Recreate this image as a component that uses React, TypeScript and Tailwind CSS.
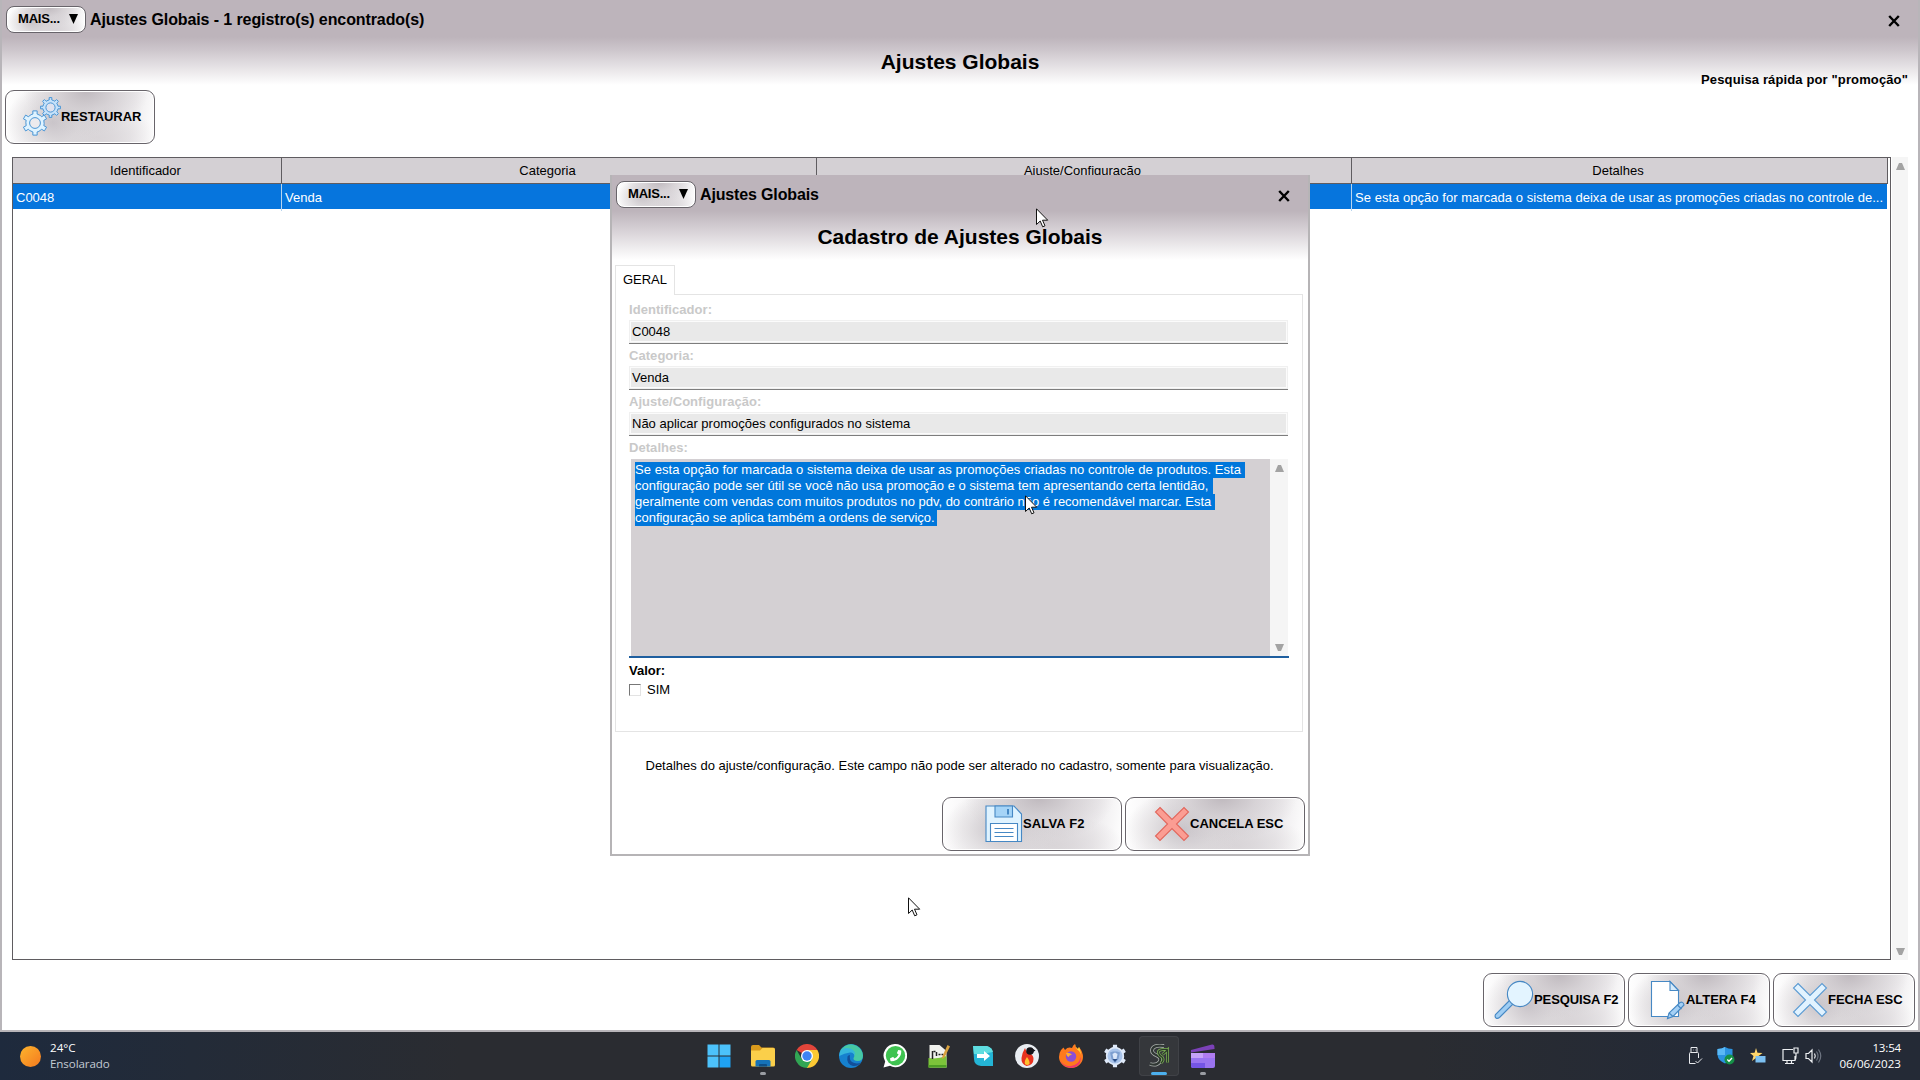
import type { ReactNode } from "react";
import { FaPhoneAlt } from "react-icons/fa";

type ChildrenProps = {
    children: ReactNode,
};

const gearPath = (cx: number, cy: number, outer: number, inner: number, teeth: number) => {
    const steps: [number, number][] = [[-0.42, inner], [-0.22, inner], [-0.17, outer], [0.17, outer], [0.22, inner]];
    const points: string[] = [];
    for (let i = 0; i < teeth; i++) {
        for (const [offset, radius] of steps) {
            const angle = ((i + offset) / teeth) * Math.PI * 2 - Math.PI / 2;
            points.push(`${(cx + Math.cos(angle) * radius).toFixed(2)} ${(cy + Math.sin(angle) * radius).toFixed(2)}`);
        }
    }
    return `M${points.join("L")}Z`;
};

const GearsIcon = () => (
    <svg className="h-[40px] w-[38px] shrink-0" viewBox="0 0 38 40" stroke="#4a96d6" strokeWidth="1">
        <path d={gearPath(27.5, 10.5, 10, 7.6, 8)} fill="#c6e2fa"/>
        <circle cx="27.5" cy="10.5" r="4.6" fill="#dfe2ee"/>
        <path d={gearPath(12, 26, 12.3, 9.2, 6)} fill="#dff3ff"/>
        <circle cx="12" cy="26" r="5.4" fill="#eceaed"/>
    </svg>
);

const SearchIcon = () => (
    <svg className="h-[40px] w-[40px] shrink-0" viewBox="0 0 40 40" stroke="#4688c4" strokeWidth="1.1">
        <path d="M16 20L1.500 34.500q-1 2.200 .5 3.500q1.500 1 3.500 -.5L19.500 23.500Z" fill="#9fcdf3"/>
        <circle cx="26" cy="14" r="12.600" fill="#e3f4ff"/>
    </svg>
);

const EditIcon = () => (
    <svg className="h-[40px] w-[36px] shrink-0" viewBox="0 0 36 40" stroke="#4688c4" strokeWidth="1.1">
        <path d="M1.500 1.500H20L28.500 10.500V36.500H1.500Z" fill="#fff"/>
        <path d="M20 1.500V10.500H28.500Z" fill="#d6ebfb"/>
        <path d="M17.500 38.500L19 33L30 22.500q3-1.500 4 2.500L23 36.500Z" fill="#a5d0f5"/>
        <path d="M27.500 25L31.500 29M19 33L23 36.500" fill="none"/>
    </svg>
);

const CrossIcon = ({ tone }: { tone: "blue" | "red" }) => (
    <svg className="h-[36px] w-[36px] shrink-0" viewBox="0 0 36 36">
        <path
            d="M6 1.500L18 13.500L30 1.500L34.500 6L22.500 18L34.500 30L30 34.500L18 22.500L6 34.500L1.500 30L13.500 18L1.500 6Z"
            fill={tone === "red" ? "#fb9d93" : "#e2f3ff"}
            stroke={tone === "red" ? "#e2665c" : "#5b9bd3"}
            strokeWidth="1.1"
        />
    </svg>
);

const SaveIcon = () => (
    <svg className="h-[38px] w-[38px] shrink-0" viewBox="0 0 38 38" stroke="#4688c4" strokeWidth="1.1">
        <path d="M1 1H29L36.500 9V36.500H1Z" fill="#dff3ff"/>
        <path d="M10 1H27.500V12H10Z" fill="#a5d4f7"/>
        <path d="M23 4V9.500" strokeWidth="2"/>
        <path d="M5.500 18.500H32.500V36.500H5.500Z" fill="#fff"/>
        <path d="M9.500 23.500H28.500M9.500 27.500H28.500M9.500 31.500H28.500"/>
    </svg>
);

const CloseIcon = () => (
    <svg className="h-[12px] w-[12px]" viewBox="0 0 12 12" stroke="#000" strokeWidth="2.4">
        <path d="M1.200 1L10.800 11M10.800 1L1.200 11"/>
    </svg>
);

const Cursor = ({ className }: { className: string }) => (
    <svg className={`absolute h-[20px] w-[13px] ${className}`} viewBox="0 0 13 20">
        <path d="M.5 .8V16.500L4.200 13L6.700 18.800L9 17.800L6.500 12.200H11.700Z" fill="#fff" stroke="#111" strokeWidth="1"/>
    </svg>
);

const Shine = ({ children, className }: ChildrenProps & { className: string }) => (
    <button
        className={`flex items-center whitespace-nowrap border border-[#68646a] bg-[radial-gradient(ellipse_42%_85%_at_54%_0%,#bfb9be_0%,#cdc8cc99_45%,transparent_100%),radial-gradient(ellipse_32%_75%_at_32%_60%,#c9c4c9_0%,#d4d0d388_55%,transparent_100%),radial-gradient(ellipse_40%_60%_at_62%_90%,#d9d5d8_0%,transparent_100%),linear-gradient(100deg,#fff_0%,#f7f6f7_14%,#eae8ea_40%,#e3e0e3_65%,#eeecee_84%,#fff_100%)] font-bold text-black shadow-[inset_0_0_0_1px_#fff] ${className}`}
    >
        {children}
    </button>
);

const MoreButton = () => (
    <Shine className="h-[27px] w-[80px] rounded-[8px] pl-[11px] text-[13px]">
        <span className="-mt-[3px] leading-[15px] tracking-[-0.2px]">MAIS...</span>
        <svg className="-mt-px ml-[9px] h-[10px] w-[9px]" viewBox="0 0 10 10" preserveAspectRatio="none"><path d="M0 0H10L5 10Z"/></svg>
    </Shine>
);

const ScrollArrow = ({ down }: { down?: boolean }) => (
    <svg className="h-[7px] w-[9px]" viewBox="0 0 9 7">
        <path d={down ? "M0 0H9L6 7H3Z" : "M0 7H9L6 0H3Z"} fill="#a3a3a3"/>
    </svg>
);

const ScrollBar = ({ className }: { className: string }) => (
    <div className={`flex flex-col items-center justify-between bg-[#f5f5f5] ${className}`}>
        <ScrollArrow/>
        <ScrollArrow down/>
    </div>
);

const Field = ({ label, value }: { label: string, value: string }) => (
    <div className="h-[46px]">
        <div className="h-[21px] text-[13px] font-bold leading-[21px] tracking-[0.05px] text-[#c9c9c9]">{label}</div>
        <div className="h-[24px] border-b border-[#7d7d7d] bg-[#e9e9e9] pl-[3px] text-[13px] leading-[24px] shadow-[inset_0_0_0_1px_#f0f0f0,inset_0_0_0_2px_#fbfbfb]">
            {value}
        </div>
    </div>
);

const details = [
    { text: "Se esta opção for marcada o sistema deixa de usar as promoções criadas no controle de produtos. Esta", className: "pr-[4px] tracking-[0.048px]" },
    { text: "configuração pode ser útil se você não usa promoção e o sistema tem apresentando certa lentidão,", className: "pr-[5px] tracking-[0.01px]" },
    { text: "geralmente com vendas com muitos produtos no pdv, do contrário não é recomendável marcar. Esta", className: "pr-[4px] tracking-[-0.025px]" },
    { text: "configuração se aplica também a ordens de serviço.", className: "pr-[2px] tracking-[-0.02px]" },
];

const SettingsDialog = () => (
    <div className="absolute left-[610px] top-[175px] flex h-[681px] w-[700px] flex-col border-2 border-t-0 border-[#b6b4b6] bg-white">
        <div className="h-[90px] bg-[linear-gradient(#bdb4bb_0px,#bdb4bb_36px,#cdc6cc_48px,#fff_85px)] px-[4px] pt-[6px]">
            <div className="flex items-center">
                <MoreButton/>
                <span className="ml-[4px] text-[16px] font-bold leading-[27px] tracking-[-0.15px]">Ajustes Globais</span>
                <div className="ml-auto mr-[14px] mt-[2px]"><CloseIcon/></div>
            </div>
            <h2 className="pt-[17px] text-center text-[21px] font-bold leading-[24px]">Cadastro de Ajustes Globais</h2>
        </div>
        <div className="z-10 ml-[3px] flex h-[30px] w-[60px] justify-center border border-b-0 border-[#e4e4e4] bg-white text-[13px] leading-[27px]">
            GERAL
        </div>
        <div className="-mt-px ml-[3px] mr-[5px] h-[438px] border border-[#e4e4e4] pl-[13px] pr-[14px] pt-[4px]">
            <Field label="Identificador:" value="C0048"/>
            <Field label="Categoria:" value="Venda"/>
            <Field label="Ajuste/Configuração:" value="Não aplicar promoções configurados no sistema"/>
            <div className="h-[22px] text-[13px] font-bold leading-[21px] tracking-[0.05px] text-[#c9c9c9]">Detalhes:</div>
            <div className="flex h-[199px] w-[660px] border-b-2 border-[#1f5f9f] pl-[2px] pr-px">
                <div className="grow bg-[#d4d0d3] pl-[4px] pt-[3px] text-[13px] leading-[16px] text-white">
                    {details.map((line) => (
                        <div key={line.text} className="h-[16px] whitespace-nowrap">
                            <span className={`inline-block h-[16px] bg-[#0077db] ${line.className}`}>{line.text}</span>
                        </div>
                    ))}
                </div>
                <ScrollBar className="w-[18px] pb-[5px] pt-[6px]"/>
            </div>
            <div className="mt-[4px] text-[13px] font-bold leading-[18px]">Valor:</div>
            <label className="flex items-center text-[13px] leading-[20px]">
                <i className="h-[12px] w-[12px] border border-[#e3e3e3] border-l-[#777] border-t-[#777]"/>
                <span className="ml-[6px]">SIM</span>
            </label>
        </div>
        <div className="mt-[22px] pr-px text-center text-[13px] leading-[24px]">
            Detalhes do ajuste/configuração. Este campo não pode ser alterado no cadastro, somente para visualização.
        </div>
        <div className="mt-auto flex justify-end gap-[3px] pb-[3px] pr-[3px]">
            <Shine className="h-[54px] w-[180px] rounded-[9px] pl-[42px] text-[13px] tracking-[0.15px]"><SaveIcon/>SALVA F2</Shine>
            <Shine className="h-[54px] w-[180px] rounded-[9px] pl-[28px] text-[13px]"><CrossIcon tone="red"/>CANCELA ESC</Shine>
        </div>
    </div>
);

const SettingsTable = () => (
    <div className="mt-[13px] flex h-[803px] pl-[12px]">
        <div className="w-[1879px] border border-[#5f5c60]">
            <div className="grid h-[26px] w-[1875px] grid-cols-[269px_535px_535px_536px] border-b border-[#5f5c60] bg-[#d4d0d4] text-center text-[13px] leading-[25px] *:border-r *:border-[#5f5c60] *:pr-[3px]">
                <div>Identificador</div>
                <div>Categoria</div>
                <div>Ajuste/Configuração</div>
                <div>Detalhes</div>
            </div>
            <div className="grid h-[25px] w-[1874px] grid-cols-[269px_535px_535px_535px] bg-[#0675dd] text-[13px] leading-[27px] text-white *:border-r *:border-[#b8d4ee] *:pl-[3px]">
                <div>C0048</div>
                <div>Venda</div>
                <div>Não aplicar promoções configurados no sistema</div>
                <div className="border-r-0! whitespace-nowrap tracking-[0.04px]">Se esta opção for marcada o sistema deixa de usar as promoções criadas no controle de...</div>
            </div>
        </div>
        <ScrollBar className="ml-[1px] w-[16px] pb-[5px] pt-[6px]"/>
    </div>
);

const TaskIcon = ({ children, active, open }: ChildrenProps & { active?: boolean, open?: boolean }) => (
    <div className={`flex h-[40px] w-[40px] flex-col items-center rounded-[4px] pt-[8px] ${active ? "bg-[#35373b] shadow-[inset_0_0_0_1px_#404247]" : ""}`}>
        <svg className="h-[24px] w-[24px] shrink-0" viewBox="0 0 24 24">{children}</svg>
        {active && <i className="mt-[4px] h-[3px] w-[16px] rounded-full bg-[#4cb0ee]"/>}
        {open && <i className="mt-[4px] h-[3px] w-[6px] rounded-full bg-[#9a9da3]"/>}
    </div>
);

const TaskbarApps = () => (
    <div className="flex gap-[4px]">
        <TaskIcon>
            <path d="M.5 .5H11.500V11.500H.5ZM12.500 .5H23.500V11.500H12.500ZM.5 12.500H11.500V23.500H.5Z" fill="#4cc2fb"/>
            <path d="M12.500 12.500H23.500V23.500H12.500Z" fill="#1fa2f3"/>
        </TaskIcon>
        <TaskIcon open>
            <path d="M0 3Q0 1 2 1H8L10.500 3.500H22Q24 3.500 24 5.500V10H0Z" fill="#d99a1c"/>
            <path d="M0 6.500H9L11.500 4H22.500Q24 4 24 6V21Q24 22.500 22.500 22.500H1.500Q0 22.500 0 21Z" fill="#fbcf4a"/>
            <path d="M4.500 22.500V17.500Q4.500 16 6 16H18Q19.500 16 19.500 17.500V22.500Z" fill="#1673b8"/>
            <path d="M8 22.500V21Q8 20 9 20H15Q16 20 16 21V22.500Z" fill="#0e4f86"/>
        </TaskIcon>
        <TaskIcon>
            <path d="M12 12L1.600 6A12 12 0 0 1 22.400 6Z" fill="#e2453a"/>
            <path d="M12 6H22.400A12 12 0 0 1 12 24L12 18Z" fill="#fcc934"/>
            <path d="M1.600 6L6.800 15L12 18L17.200 15L12 24A12 12 0 0 1 1.600 6Z" fill="#31a554"/>
            <circle cx="12" cy="12" r="6" fill="#fff"/>
            <circle cx="12" cy="12" r="4.700" fill="#3f83f3"/>
        </TaskIcon>
        <TaskIcon>
            <circle cx="12" cy="12" r="12" fill="#1681cf"/>
            <path d="M.8 8A12 12 0 0 1 24 11.500Q24 17 18.500 17Q14 17 14.500 14Q16.500 11 13.500 8.500Q8 4.500 .8 8Z" fill="#47c9a4"/>
            <path d="M.8 8Q4 2.500 11 4.500Q17 6.500 16 12Q15 8 11 8.500Q5.500 9 .2 12Z" fill="#35b5dc"/>
            <path d="M8.500 12.500Q7 20 14 22Q19 22.500 22 18.500Q17 20.500 13 18Q10 16 11 11Q9 11 8.500 12.500Z" fill="#124f9a"/>
        </TaskIcon>
        <TaskIcon>
            <path d="M12.500 0A11.600 11.600 0 1 1 7 21.800L.5 23.500L2.200 17.500A11.600 11.600 0 0 1 12.500 0Z" fill="#fff"/>
            <circle cx="12.500" cy="11.700" r="9.700" fill="#3fc351"/>
            <g transform="translate(18.500 6) scale(-1 1)"><FaPhoneAlt size={11.500} color="#fff"/></g>
        </TaskIcon>
        <TaskIcon>
            <path d="M2.500 1H12.500L19.500 7V23.500H2.500Z" fill="#f1f2ee"/>
            <path d="M1.500 14Q10 15.500 19.500 12V23.500H1.500Z" fill="#7cc43a"/>
            <path d="M1.500 21H19.500V23.500H1.500Z" fill="#4d9e25"/>
            <path d="M5.500 7V15M6.500 7.500H8.500M9.500 8V12M11.500 10.500H13.500M14.500 10.500H16.500" stroke="#222" strokeWidth="1.500"/>
            <path d="M20.500 1L23 2.500L17.500 13.500L15 15L15.500 12Z" fill="#d8a13e"/>
        </TaskIcon>
        <TaskIcon>
            <path d="M2 2H16Q22 4 22 10V22H10Q3 21 3 15Z" fill="#24b5d6"/>
            <path d="M2 2H16Q21 3.500 22 8L11 10H3Z" fill="#5fdde0"/>
            <path d="M6 10H13V7L19 12L13 17V14H6Z" fill="#fff"/>
        </TaskIcon>
        <TaskIcon>
            <circle cx="12" cy="12" r="12" fill="#e9edf2"/>
            <path d="M10 4Q7 9 6.500 14Q6 20 11.500 22Q18.500 21 18.500 15Q18.500 11 15 9.500Q11 8 10 4Z" fill="#e8321e"/>
            <path d="M12 13Q9 17 10 20Q12 22 14.500 20Q15 17 12 13Z" fill="#ffc02e"/>
            <circle cx="15" cy="7" r="3.800" fill="#15151a"/>
            <path d="M18 5L20.500 6.500L18 8Z" fill="#15151a"/>
        </TaskIcon>
        <TaskIcon>
            <path d="M2 6L4.500 3.500L6 6Q9 2.500 13 4Q14 1 16 0Q16 3 19 5L20 3Q24 8 24 13A12 11 0 0 1 0 13Q0 9 2 6Z" fill="#ff7a1e"/>
            <path d="M16 0Q16 4 20 7Q24 12 21 18Q24 12 20 3L19 5Q16 3 16 0Z" fill="#ffd43a"/>
            <path d="M1 16Q5 23 12 22Q20 21 21.500 13Q22.500 20 17 22.800Q11 25.500 5 21.500Q2 19 1 16Z" fill="#f0376a"/>
            <circle cx="12" cy="12.500" r="5.200" fill="#8b4fd6"/>
            <path d="M7 9Q10 8 13 10.500Q10 11 9.500 13Q7.500 12 7 9Z" fill="#ffb02e"/>
        </TaskIcon>
        <TaskIcon>
            <path d={gearPath(12, 12, 11.500, 9.200, 6)} fill="#dfeafa"/>
            <circle cx="12" cy="12" r="7.500" fill="#a9c4ea"/>
            <path d="M7 8.500L10 7.500H14L17 8.500L15.500 15L12 19L8.500 15Z" fill="#7d9fd0"/>
            <path d="M9.500 10L12 8.500L14.500 10L13.500 15H10.500Z" fill="#dbe7f8"/>
            <path d="M10.800 15.500H13.200L12 17Z" stroke="#2b4f87" strokeWidth="1.200" fill="#2b4f87"/>
        </TaskIcon>
        <TaskIcon active>
            <g fill="none">
                <path d="M17 2Q5.500 .5 5 6.500Q5 9.500 10 11.500Q15 14 12.500 18Q9.500 22 3 20" stroke="#a9aeab" strokeWidth="3.800"/>
                <path d="M17 2Q5.500 .5 5 6.500Q5 9.500 10 11.500Q15 14 12.500 18Q9.500 22 3 20" stroke="#2f3633" strokeWidth="2.200"/>
                <path d="M20 5.500Q10.500 5 11.500 9Q12 11.500 15 13Q17.500 16 14 19M15.500 10.500L20.500 6V18.500" stroke="#7db255" strokeWidth="2.800"/>
                <path d="M20 5.500Q10.500 5 11.500 9Q12 11.500 15 13Q17.500 16 14 19M15.500 10.500L20.500 6V18.500" stroke="#2c3a2b" strokeWidth="1.300"/>
            </g>
        </TaskIcon>
        <TaskIcon open>
            <path d="M0 6L21 .5Q23 0 23.300 2L23.600 5L0 8.500Z" fill="#7b41b8"/>
            <path d="M0 9H24V22Q24 24 22 24H2Q0 24 0 22Z" fill="#9a74f0"/>
            <path d="M0 9H24V14H0Z" fill="#c6a2f8"/>
            <path d="M12 9H24V14H12Z" fill="#b07cf0"/>
            <path d="M0 19H14V24H2Q0 24 0 22Z" fill="#7455e6"/>
        </TaskIcon>
    </div>
);

const TrayIcons = () => (
    <div className="flex items-center">
        <svg className="h-[20px] w-[16px]" viewBox="0 0 16 20" fill="none" stroke="#e8eaee">
            <path d="M4 1.500H10V6M4 1.500V6M2.500 17.500V7.500Q2.500 6.500 3.500 6.500H10.500Q11.500 6.500 11.500 7.500V12M2.500 17.500H8.500M6 4H6.500M8 4H8.500M8.500 15L10.500 17L15 12.500"/>
        </svg>
        <svg className="ml-[14px] h-[18px] w-[18px]" viewBox="0 0 18 18">
            <path d="M8 0Q11 2 15.500 2V8Q15 13.500 8 16.500Q1 13.500 .5 8V2Q5 2 8 0Z" fill="#2b93e0"/>
            <path d="M8 0Q5 2 .5 2V8H8Z" fill="#5ab8f5"/>
            <circle cx="12.500" cy="12.500" r="5" fill="#159047"/>
            <path d="M10.300 12.500L12 14.200L15 11" stroke="#fff" strokeWidth="1.300" fill="none"/>
        </svg>
        <svg className="ml-[15px] h-[16px] w-[17px]" viewBox="0 0 17 16">
            <path d="M6 0L7.500 4.800L12.500 5L8.500 8L10 13L6 10L2 13L3.500 8L0 5L4.600 4.800Z" fill="#ffd66b"/>
            <path d="M5.500 8H15.500V14.500H5.500Z" fill="#7cc0f2"/>
        </svg>
        <svg className="ml-[15px] h-[18px] w-[17px]" viewBox="0 0 17 18" fill="none" stroke="#eceef1" strokeWidth="1.200">
            <path d="M11 2.500H1V13.500H13V9M5 13.500V16.500M9.500 13.500V16.500M3 16.500H12M12 1H16V6H12ZM14 6V9M14 9Q14 12 13 13"/>
        </svg>
        <svg className="ml-[6px] h-[16px] w-[18px]" viewBox="0 0 18 16" fill="none" stroke="#eceef1" strokeWidth="1.200">
            <path d="M1 5.500H3.500L7 2V14L3.500 10.500H1ZM9.500 5.500Q11 8 9.500 10.500"/>
            <path d="M11.500 3.500Q14.500 8 11.500 12.500M13.500 1.500Q18 8 13.500 14.500" stroke="#6d7480"/>
        </svg>
    </div>
);

const Taskbar = () => (
    <div className="grid h-[48px] grid-cols-[699px_1fr_auto] items-center bg-[linear-gradient(90deg,#1e2a3d_0%,#232b38_10%,#2a2c31_24%,#2a2c31_74%,#242a36_88%,#242a36_100%)] font-['Open_Sans','Noto_Sans',sans-serif] text-[11.6px] leading-[16px] text-white">
        <div className="flex items-center pl-[20px]">
            <i className="h-[21px] w-[21px] rounded-full bg-[linear-gradient(135deg,#fdb52d,#f4791f)]"/>
            <div className="ml-[9px]">
                <div>24°C</div>
                <div className="tracking-[-0.1px] text-[#c3cad4]">Ensolarado</div>
            </div>
        </div>
        <TaskbarApps/>
        <div className="flex items-center pr-[19px]">
            <TrayIcons/>
            <div className="ml-[16px] text-right">
                <div className="tracking-[-0.2px]">13:54</div>
                <div>06/06/2023</div>
            </div>
        </div>
    </div>
);

export default function App() {
    return (
        <div className="relative h-[1080px] w-[1920px] overflow-hidden bg-white font-['Liberation_Sans',Arial,sans-serif] text-black">
            <div className="flex h-[1032px] flex-col border-2 border-t-0 border-[#b8b5b9] bg-white">
                <div className="h-[90px] bg-[linear-gradient(#bdb4bb_0px,#bdb4bb_37px,#cdc6cc_50px,#fff_85px)] px-[4px] pt-[6px]">
                    <div className="flex items-center">
                        <MoreButton/>
                        <span className="ml-[4px] text-[16px] font-bold leading-[27px] tracking-[-0.1px]">Ajustes Globais - 1 registro(s) encontrado(s)</span>
                        <div className="ml-auto mr-[14px] mt-[2px]"><CloseIcon/></div>
                    </div>
                    <h1 className="pt-[17px] text-center text-[21px] font-bold leading-[24px]">Ajustes Globais</h1>
                    <div className="-mt-[3px] pr-[6px] text-right text-[13px] font-bold leading-[18px] tracking-[0.13px]">Pesquisa rápida por "promoção"</div>
                </div>
                <div className="-ml-[2px] pl-[5px]">
                    <Shine className="h-[54px] w-[150px] rounded-[9px] pl-[17px] text-[13px] tracking-[-0.02px]"><GearsIcon/>RESTAURAR</Shine>
                </div>
                <div className="-ml-[2px]"><SettingsTable/></div>
                <div className="mt-auto flex justify-end gap-[3px] pb-[3px] pr-[3px]">
                    <Shine className="h-[54px] w-[142px] rounded-[9px] pl-[10px] text-[13px] tracking-[-0.1px]"><SearchIcon/>PESQUISA F2</Shine>
                    <Shine className="h-[54px] w-[142px] rounded-[9px] pl-[21px] text-[13px] tracking-[-0.05px]"><EditIcon/>ALTERA F4</Shine>
                    <Shine className="h-[54px] w-[142px] rounded-[9px] pl-[18px] text-[13px]"><CrossIcon tone="blue"/>FECHA ESC</Shine>
                </div>
            </div>
            <Taskbar/>
            <SettingsDialog/>
            <Cursor className="left-[1036px] top-[208px]"/>
            <Cursor className="left-[1025px] top-[495px]"/>
            <Cursor className="left-[908px] top-[897px]"/>
        </div>
    );
}
